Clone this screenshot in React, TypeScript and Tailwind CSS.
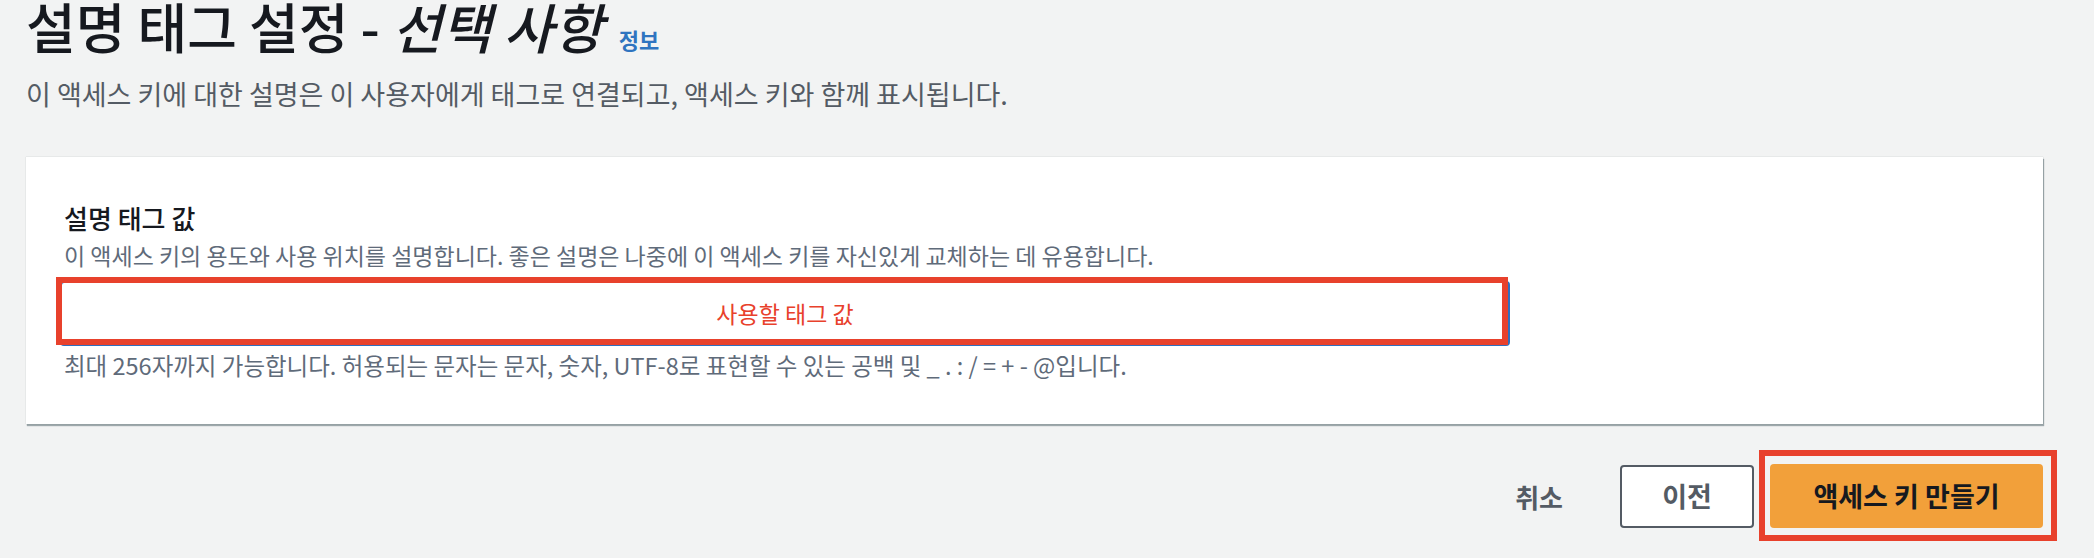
import React from 'react';

const font = "font-['Noto_Sans_CJK_KR','Noto_Sans',sans-serif]";

export default function App() {
  return (
    <div
      className={`min-h-[558px] w-full bg-[#f2f3f3] pl-[26px] pr-[51px] ${font}`}
    >
      {/* Page header */}
      <div className="flex h-[52px] items-baseline">
        <h1 className="text-[54px] leading-[52px] font-medium text-[#16191f]">
          설명 태그 설정 - <i>선택 사항</i>
        </h1>
        <a className="ml-[16px] text-[22px] leading-[20px] font-bold text-[#2f74c0]">정보</a>
      </div>
      <p className="mt-[25px] text-[27px] leading-[34px] text-[#545b64]">
        이 액세스 키에 대한 설명은 이 사용자에게 태그로 연결되고, 액세스 키와 함께 표시됩니다.
      </p>

      {/* Form card */}
      <div className="mt-[46px] bg-white px-[38px] pt-[44px] pb-[44px] shadow-[0_0_1px_0_rgba(0,28,36,0.25),1px_2px_1px_0_rgba(0,28,36,0.35)]">
        <label className="block text-[26px] leading-[34px] font-medium text-[#16191f]">
          설명 태그 값
        </label>
        <p className="mt-[5px] text-[23px] leading-[30px] text-[#5f6b7a]">
          이 액세스 키의 용도와 사용 위치를 설명합니다. 좋은 설명은 나중에 이 액세스 키를 자신있게 교체하는 데 유용합니다.
        </p>
        <div className="relative mt-[11px] -ml-[4px] w-[1450px]">
          <div className="flex h-[65px] items-center justify-center rounded-[4px] border-2 border-[#2f6fbf] bg-white text-[23px] text-[#e8412c]">
            사용할 태그 값
          </div>
          {/* annotation frame */}
          <div className="pointer-events-none absolute -left-[4px] -top-[4px] h-[68px] w-[1452px] border-[6px] border-[#e8412c]" />
        </div>
        <p className="mt-[4px] text-[23.5px] leading-[30px] text-[#5f6b7a]">
          최대 256자까지 가능합니다. 허용되는 문자는 문자, 숫자, UTF-8로 표현할 수 있는 공백 및 _ . : / = + - @입니다.
        </p>
      </div>

      {/* Actions */}
      <div className="mt-[40px] flex items-center justify-end">
        <button className="px-[20px] text-[26px] font-bold text-[#545b64]">취소</button>
        <button className="ml-[37px] h-[63px] w-[134px] rounded-[4px] border-2 border-[#545b64] bg-white text-[27px] font-bold text-[#545b64]">
          이전
        </button>
        <div className="relative ml-[16px]">
          <button className="h-[64px] w-[273px] rounded-[4px] bg-[#f2a03a] text-[27px] font-bold text-[#16191f]">
            액세스 키 만들기
          </button>
          <div className="pointer-events-none absolute -left-[11px] -top-[14px] -right-[14px] -bottom-[13px] border-[6px] border-[#e8412c]" />
        </div>
      </div>
    </div>
  );
}
